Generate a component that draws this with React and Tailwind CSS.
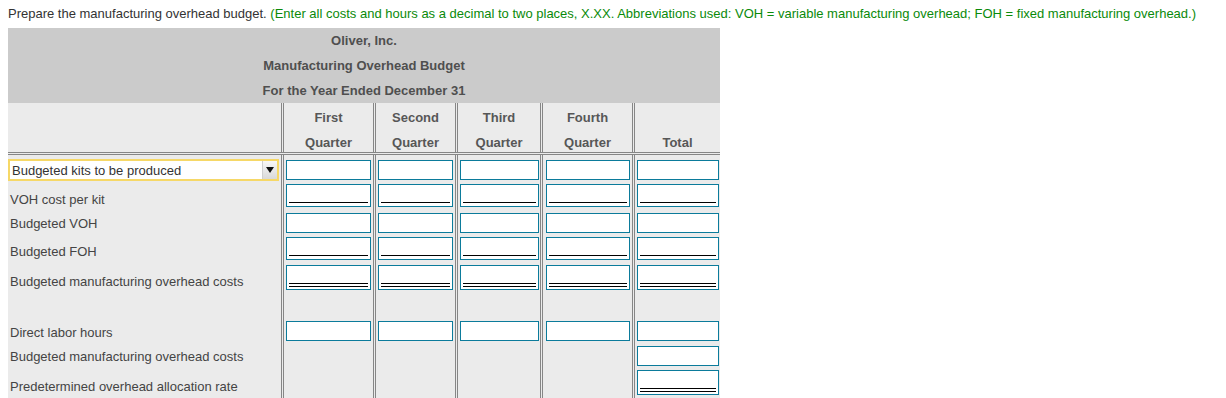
import React from "react";

const FONT = { fontFamily: '"Liberation Sans", Arial, Helvetica, sans-serif' };

// Quarter columns + total: width includes the 3px double left rule
const COLS = [
  { key: "q1", w: "w-[92px]", pad: "pl-[2px] pr-[2px]", top: "First", bottom: "Quarter" },
  { key: "q2", w: "w-[82px]", pad: "pl-[2px] pr-[2px]", top: "Second", bottom: "Quarter" },
  { key: "q3", w: "w-[85px]", pad: "pl-[2px] pr-[1px]", top: "Third", bottom: "Quarter" },
  { key: "q4", w: "w-[92px]", pad: "pl-[3px] pr-[2px]", top: "Fourth", bottom: "Quarter" },
  { key: "tot", w: "w-[88px]", pad: "pl-[2px] pr-[1px]", top: "", bottom: "Total" },
];

const RULE = "shrink-0 border-l-[3px] border-double border-[#868686]";

function Entry({ kind }) {
  if (kind === "single") {
    return (
      <div className="flex h-[23px] flex-col justify-end border border-[#0b7b9b] bg-white px-[2px] pb-[3px]">
        <div className="h-px bg-black" />
      </div>
    );
  }
  if (kind === "double") {
    return (
      <div className="flex h-[25px] flex-col justify-end border border-[#0b7b9b] bg-white px-[2px] pb-[2px]">
        <div className="h-[4px] border-y border-black" />
      </div>
    );
  }
  return <div className="h-[20px] border border-[#0b7b9b] bg-white" />;
}

function KitSelect() {
  return (
    <div className="flex h-[22px] w-[271px] items-center border-2 border-[#f6d867] bg-white">
      <span className="pl-[2px] text-[13px] leading-none text-[#333]">Budgeted kits to be produced</span>
      <div className="ml-auto flex h-full w-[15px] items-center justify-center border-l border-[#cfcfcf] bg-gradient-to-b from-[#f8f8f8] to-[#d9d9d9]">
        <svg width="8" height="6" viewBox="0 0 8 6">
          <polygon points="0,0 8,0 4,6" fill="#111" />
        </svg>
      </div>
    </div>
  );
}

const ROWS = [
  { h: "h-[27px]", label: <KitSelect />, lpt: "pt-[4px]", bpt: "pt-[5px]", kind: "plain", cols: 5 },
  { h: "h-[28px]", label: "VOH cost per kit", lpt: "pt-[9px]", bpt: "pt-[2px]", kind: "single", cols: 5 },
  { h: "h-[25px]", label: "Budgeted VOH", lpt: "pt-[5px]", bpt: "pt-[3px]", kind: "plain", cols: 5 },
  { h: "h-[27px]", label: "Budgeted FOH", lpt: "pt-[8px]", bpt: "pt-[2px]", kind: "single", cols: 5 },
  { h: "h-[58px]", label: "Budgeted manufacturing overhead costs", lpt: "pt-[11px]", bpt: "pt-[3px]", kind: "double", cols: 5 },
  { h: "h-[23px]", label: "Direct labor hours", lpt: "pt-[4px]", bpt: "pt-[1px]", kind: "plain", cols: 5 },
  { h: "h-[25px]", label: "Budgeted manufacturing overhead costs", lpt: "pt-[5px]", bpt: "pt-[3px]", kind: "plain", cols: 1 },
  { h: "h-[30px]", label: "Predetermined overhead allocation rate", lpt: "pt-[10px]", bpt: "pt-[2px]", kind: "double", cols: 1 },
];

export default function App() {
  return (
    <div className="min-h-[398px] bg-white pl-[8px]" style={FONT}>
      <p className="pt-[5px] pb-[5px] text-[13px] leading-[18px] text-[#333]">
        Prepare the manufacturing overhead budget.{" "}
        <span className="text-[#0a8a0a]">
          (Enter all costs and hours as a decimal to two places, X.XX. Abbreviations used: VOH = variable
          manufacturing overhead; FOH = fixed manufacturing overhead.)
        </span>
      </p>

      <div className="w-[712px] text-[13px]">
        {/* Title band */}
        <div className="flex h-[75px] flex-col items-center bg-[#cbcbcb] font-bold leading-[25px] text-[#4f4f4f]">
          <div>Oliver, Inc.</div>
          <div>Manufacturing Overhead Budget</div>
          <div>For the Year Ended December 31</div>
        </div>

        {/* Column headings */}
        <div className="flex h-[52px] border-b-[3px] border-double border-[#868686] bg-[#ebebeb]">
          <div className="w-[273px] shrink-0" />
          {COLS.map((c) => (
            <div key={c.key} className={`${RULE} ${c.w} flex flex-col items-center pt-[3px] font-bold text-[#575757]`}>
              <div className="h-[24px] leading-[24px]">{c.top}</div>
              <div className="h-[22px] leading-[26px]">{c.bottom}</div>
            </div>
          ))}
        </div>

        {/* Body rows */}
        {ROWS.map((r, i) => (
          <div key={i} className={`flex ${r.h} bg-[#ebebeb]`}>
            <div className={`w-[273px] shrink-0 ${r.lpt} ${typeof r.label === "string" ? "pl-[2px]" : ""}`}>
              {typeof r.label === "string" ? (
                <div className="leading-[18px] text-[#444]">{r.label}</div>
              ) : (
                r.label
              )}
            </div>
            {COLS.map((c, j) => {
              const show = r.cols === 5 || j === COLS.length - 1;
              return (
                <div key={c.key} className={`${RULE} ${c.w} ${c.pad} ${r.bpt}`}>
                  {show && <Entry kind={r.kind} />}
                </div>
              );
            })}
          </div>
        ))}
      </div>
    </div>
  );
}
